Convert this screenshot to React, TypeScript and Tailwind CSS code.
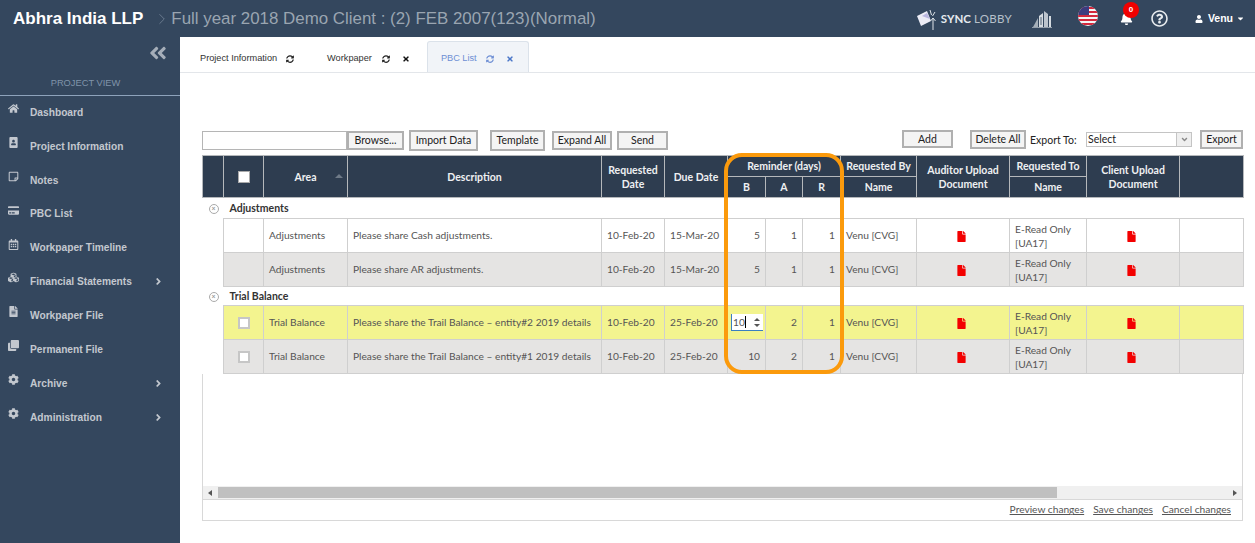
import {
  FaAngleDoubleLeft,
  FaAngleRight,
  FaBell,
  FaCaretDown,
  FaClone,
  FaCog,
  FaCreditCard,
  FaCubes,
  FaFile,
  FaFileAlt,
  FaHome,
  FaPortrait,
  FaRegCalendarAlt,
  FaRegQuestionCircle,
  FaRegStickyNote,
  FaSyncAlt,
  FaTimes,
  FaUser,
} from 'react-icons/fa';
import { ChevronRight } from 'lucide-react';

const NAV = [
  { label: 'Dashboard', icon: FaHome },
  { label: 'Project Information', icon: FaPortrait },
  { label: 'Notes', icon: FaRegStickyNote },
  { label: 'PBC List', icon: FaCreditCard },
  { label: 'Workpaper Timeline', icon: FaRegCalendarAlt },
  { label: 'Financial Statements', icon: FaCubes, arrow: true },
  { label: 'Workpaper File', icon: FaFileAlt },
  { label: 'Permanent File', icon: FaClone },
  { label: 'Archive', icon: FaCog, arrow: true },
  { label: 'Administration', icon: FaCog, arrow: true },
];

const COLS = [21, 40, 84, 254, 63, 63, 38, 37, 38, 76, 93, 77, 93, 64];

const ROWS = [
  { group: 'Adjustments' },
  { area: 'Adjustments', desc: 'Please share Cash adjustments.', due: '15-Mar-20', b: '5', a: '1', r: '1', bg: 'bg-white' },
  { area: 'Adjustments', desc: 'Please share AR adjustments.', due: '15-Mar-20', b: '5', a: '1', r: '1', bg: 'bg-[#e5e4e3]' },
  { group: 'Trial Balance' },
  { area: 'Trial Balance', desc: 'Please share the Trail Balance – entity#2 2019 details', due: '25-Feb-20', b: 'edit', a: '2', r: '1', bg: 'bg-[#f3f48f]', check: true },
  { area: 'Trial Balance', desc: 'Please share the Trail Balance – entity#1 2019 details', due: '25-Feb-20', b: '10', a: '2', r: '1', bg: 'bg-[#e5e4e3]', check: true },
];

const th = 'border border-[#b5b8bb] text-center align-middle font-bold leading-[14px] p-0';
const td = 'border border-[#cfcfcf] px-[5px] py-0 align-middle whitespace-nowrap';

const Btn = ({ children, className }: { children: React.ReactNode; className: string }) => (
  <button className={`border-2 border-[#b0b0b0] bg-[#f4f4f4] text-[10.5px] text-[#222] shrink-0 leading-none ${className}`}>
    {children}
  </button>
);

const RedFile = () => <FaFile className="mr-[3px] inline text-[#f30000] text-[11px]" />;

const Flag = () => (
  <svg width="20" height="20" viewBox="0 0 20 20">
    <clipPath id="flagclip">
      <circle cx="10" cy="10" r="10" />
    </clipPath>
    <g clipPath="url(#flagclip)">
      <rect width="20" height="20" fill="#f5f5f5" />
      <rect y="1" width="20" height="2" fill="#d3283c" />
      <rect y="5" width="20" height="2" fill="#d3283c" />
      <rect y="9" width="20" height="2" fill="#d3283c" />
      <rect y="13" width="20" height="2" fill="#d3283c" />
      <rect y="17" width="20" height="2" fill="#d3283c" />
      <rect width="11" height="9" fill="#3c3b7e" />
    </g>
  </svg>
);

const Building = () => (
  <svg width="20" height="18" viewBox="0 0 20 18" fill="#d5dbe0">
    <path d="M1 17 L6 8 L6 17 Z" opacity="0.7" />
    <path d="M7 6 L11 3 L11 17 L7 17 Z" />
    <path d="M12 1 L16 4 L16 17 L12 17 Z" opacity="0.85" />
    <rect x="17" y="6" width="2" height="11" />
    <rect x="0" y="17" width="20" height="1" opacity="0.6" />
    <path d="M8 8h2M8 10h2M8 12h2M8 14h2" stroke="#34475e" strokeWidth="0.8" />
  </svg>
);

const SyncLogo = () => (
  <svg width="24" height="24" viewBox="0 0 24 24">
    <path d="M1 9 L11 4 L15 14 L5 19 Z" fill="#ececf6" />
    <path d="M6 9 L11 6 L14 12 Z" fill="#b9b6e0" />
    <path d="M17 23 V11 M14.5 14 L17 11 L19.5 14" stroke="#dfe4e8" strokeWidth="1" fill="none" />
    <path d="M14 3 L15.5 8 M19 5 L16.5 9" stroke="#dfe4e8" strokeWidth="1" />
  </svg>
);

const App = () => {
  return (
    <div className="flex h-[543px] w-[1255px] flex-col overflow-hidden bg-white font-['Liberation_Sans',sans-serif]">
      <header className="flex h-[37px] shrink-0 items-center bg-[#34475e] pl-[13px] pr-[10px]">
        <span className="text-[17px] font-bold text-white">Abhra India LLP</span>
        <ChevronRight size={18} strokeWidth={1} className="ml-[10px] text-[#7a8a9c]" />
        <span className="text-[16.9px] text-[#9aa5b1]">Full year 2018 Demo Client : (2) FEB 2007(123)(Normal)</span>
        <div className="ml-auto flex items-center">
          <SyncLogo />
          <span className="ml-[1px] text-[11.5px] font-bold text-[#e6eaee] font-['Lato',sans-serif]">SYNC</span>
          <span className="ml-[3px] text-[11.5px] text-[#b6c0ca] font-['Lato',sans-serif] tracking-[0.3px]">LOBBY</span>
          <div className="ml-[20px]"><Building /></div>
          <div className="mb-[5px] ml-[26px]"><Flag /></div>
          <div className="relative ml-[22px]">
            <FaBell className="text-[13px] text-white" />
            <span className="absolute -top-[10px] -right-[6px] flex h-[16px] w-[16px] items-center justify-center rounded-full bg-[#f00000] text-[8px] font-bold text-white">0</span>
          </div>
          <FaRegQuestionCircle className="ml-[18px] text-[17px] text-[#e8ecef]" />
          <FaUser className="ml-[27px] text-[8px] text-white" />
          <span className="ml-[5px] text-[10.5px] font-bold text-white">Venu</span>
          <FaCaretDown className="ml-[3px] text-[9px] text-white" />
        </div>
      </header>

      <div className="flex min-h-0 flex-1">
        <aside className="flex w-[180px] shrink-0 flex-col bg-[#34475e]">
          <div className="flex h-[33px] justify-end pr-[12px] pt-[6px]">
            <FaAngleDoubleLeft className="text-[20px] text-[#a5aeb9]" />
          </div>
          <div className="h-[26px] border-b border-[#8ea3bb] pr-[9px] pt-[7px] text-center text-[9.3px] text-[#8094aa]">PROJECT VIEW</div>
          <nav className="-mt-[0.5px]">
            {NAV.map((item) => (
              <div key={item.label} className="flex h-[33.9px] items-center pl-[8px] pr-[16px] text-[#c3c8cf]">
                <div className="flex w-[22px] -translate-y-[4px] justify-start">
                  <item.icon className="text-[11px]" />
                </div>
                <span className="text-[10.2px] font-bold">{item.label}</span>
                {item.arrow && <FaAngleRight className="ml-auto text-[11px]" />}
              </div>
            ))}
          </nav>
        </aside>

        <main className="flex min-w-0 flex-1 flex-col">
          <div className="flex h-[36px] shrink-0 items-end border-b border-[#e3e6ea] pl-[20px]">
            <div className="flex h-[29px] items-center pt-[3px] text-[9.2px] text-[#333]">
              <span>Project Information</span>
              <FaSyncAlt className="ml-[9px] text-[8px] text-[#222]" />
            </div>
            <div className="ml-[33px] flex h-[29px] items-center pt-[3px] text-[9.2px] text-[#333]">
              <span>Workpaper</span>
              <FaSyncAlt className="ml-[10px] text-[8px] text-[#222]" />
              <FaTimes className="ml-[12px] text-[8px] text-[#111]" />
            </div>
            <div className="ml-[17px] flex h-[31px] w-[102px] items-center rounded-t-[3px] border border-b-0 border-[#dbe2ea] bg-[#f1f4f8] pl-[13px] pt-[4px] text-[9.2px] text-[#6e8fd4]">
              <span>PBC List</span>
              <FaSyncAlt className="ml-[9px] text-[8px]" />
              <FaTimes className="ml-[12px] text-[8px] text-[#4a76c8]" />
            </div>
          </div>

          <div className="relative ml-[22px] mr-[12px] flex min-h-0 flex-1 flex-col">
            <div className="mt-[57px] flex h-[22px] items-start font-['Lato',sans-serif]">
              <div className="mt-[1px] h-[19px] w-[145px] shrink-0 border border-[#b5b5b5] bg-white" />
              <Btn className="mt-[1px] h-[19px] w-[57px] border-1">Browse...</Btn>
              <Btn className="ml-[5px] h-[21px] w-[69px]">Import Data</Btn>
              <Btn className="ml-[12px] h-[21px] w-[55px]">Template</Btn>
              <Btn className="ml-[7px] h-[19px] w-[60px] mt-[1px]">Expand All</Btn>
              <Btn className="ml-[5px] h-[19px] w-[51px] mt-[1px]">Send</Btn>
              <Btn className="ml-[234px] h-[18px] w-[51px]">Add</Btn>
              <Btn className="ml-[17px] h-[19px] w-[56px]">Delete All</Btn>
              <span className="ml-[4px] mt-[3px] w-[47px] shrink-0 text-[10.5px] leading-[14px] text-[#222]">Export To:</span>
              <div className="ml-[9px] mt-[2px] flex h-[15px] w-[106px] shrink-0 items-center border border-[#c4c4c4] pl-[1px] text-[10.5px] text-[#222]">
                Select
                <span className="ml-auto flex h-[13px] w-[15px] items-center justify-center border-l border-[#c4c4c4] bg-[#efefef]">
                  <FaAngleRight className="rotate-90 text-[9px] text-[#888]" />
                </span>
              </div>
              <Btn className="ml-[8px] h-[19px] w-[43px]">Export</Btn>
            </div>

            <table className="mt-[3px] w-[1041px] table-fixed border-collapse font-['Lato',sans-serif] text-[10.2px]">
              <colgroup>
                {COLS.map((w, i) => (
                  <col key={i} style={{ width: w }} />
                ))}
              </colgroup>
              <thead className="bg-[#2e3d50] text-[10.5px] text-[#eef0f2]">
                <tr className="h-[21px]">
                  <th rowSpan={2} className={th} />
                  <th rowSpan={2} className={th}>
                    <span className="mx-auto block h-[12px] w-[12px] border border-[#aaa] bg-white" />
                  </th>
                  <th rowSpan={2} className={th}>
                    <div className="relative">
                      Area
                      <span className="absolute right-[4px] top-[4px] h-0 w-0 border-x-[4px] border-b-[4px] border-x-transparent border-b-[#6f7b88]" />
                    </div>
                  </th>
                  <th rowSpan={2} className={th}>Description</th>
                  <th rowSpan={2} className={th}>Requested<br />Date</th>
                  <th rowSpan={2} className={th}>Due Date</th>
                  <th colSpan={3} className={th}>Reminder (days)</th>
                  <th className={th}>Requested By</th>
                  <th rowSpan={2} className={th}>Auditor Upload<br />Document</th>
                  <th className={th}>Requested To</th>
                  <th rowSpan={2} className={th}>Client Upload<br />Document</th>
                  <th rowSpan={2} className={th} />
                </tr>
                <tr className="h-[21px]">
                  <th className={th}>B</th>
                  <th className={th}>A</th>
                  <th className={th}>R</th>
                  <th className={th}>Name</th>
                  <th className={th}>Name</th>
                </tr>
              </thead>
              <tbody className="text-[#555]">
                {ROWS.map((row, i) =>
                  row.group ? (
                    <tr key={i} className={row.group === 'Adjustments' ? 'h-[21px]' : 'h-[19px]'}>
                      <td colSpan={14} className="p-0 align-middle">
                        <div className="flex items-center pt-[1px] font-bold text-[10.5px] text-[#333]">
                          <span className="ml-[6px] flex h-[10px] w-[10px] items-center justify-center rounded-full border border-[#aaa] text-[7px] leading-none text-[#999]">×</span>
                          <span className="ml-[11px]">{row.group}</span>
                        </div>
                      </td>
                    </tr>
                  ) : (
                    <tr key={i} className="h-[34px]">
                      <td className="p-0" />
                      <td className={`${td} ${row.bg} text-center`}>
                        {row.check && <span className="mx-auto block h-[12px] w-[12px] border-2 border-[#c6c6c6] bg-white" />}
                      </td>
                      <td className={`${td} ${row.bg}`}>{row.area}</td>
                      <td className={`${td} ${row.bg}`}>{row.desc}</td>
                      <td className={`${td} ${row.bg}`}>10-Feb-20</td>
                      <td className={`${td} ${row.bg}`}>{row.due}</td>
                      <td className={`${td} ${row.bg} text-right`}>
                        {row.b === 'edit' ? (
                          <div className="-mx-[2px] flex h-[17px] w-[32px] items-center border-b border-l border-[#3a7fc1] bg-white pl-[1px] text-left leading-none">
                            <span>10</span>
                            <span className="h-[12px] w-px bg-black" />
                            <span className="ml-auto flex flex-col pr-[3px] text-[#555]">
                              <span className="h-0 w-0 border-x-[3px] border-b-[3px] border-x-transparent border-b-[#555]" />
                              <span className="mt-[3px] h-0 w-0 border-x-[3px] border-t-[3px] border-x-transparent border-t-[#555]" />
                            </span>
                          </div>
                        ) : (
                          row.b
                        )}
                      </td>
                      <td className={`${td} ${row.bg} text-right`}>{row.a}</td>
                      <td className={`${td} ${row.bg} text-right`}>{row.r}</td>
                      <td className={`${td} ${row.bg}`}>Venu [CVG]</td>
                      <td className={`${td} ${row.bg} text-center`}><RedFile /></td>
                      <td className={`${td} ${row.bg} leading-[14px]`}>E-Read Only<br />[UA17]</td>
                      <td className={`${td} ${row.bg} text-center`}><RedFile /></td>
                      <td className={`${td} ${row.bg}`} />
                    </tr>
                  ),
                )}
              </tbody>
            </table>

            <div className="flex h-[147px] w-[1041px] flex-col border border-t-0 border-[#d8d8d8] font-['Lato',sans-serif]">
              <div className="flex-1" />
              <div className="flex h-[13px] items-center bg-[#f0f0f0]">
                <span className="ml-[5px] h-0 w-0 border-y-[3px] border-r-[4px] border-y-transparent border-r-[#555]" />
                <div className="ml-[6px] h-[11px] w-[839px] bg-[#c0c0c0]" />
                <span className="ml-auto mr-[5px] h-0 w-0 border-y-[3px] border-l-[4px] border-y-transparent border-l-[#555]" />
              </div>
              <div className="flex h-[21px] items-center justify-end gap-[9px] border-t border-[#d8d8d8] pr-[11px] text-[10.2px] text-[#555] underline">
                <span>Preview changes</span>
                <span>Save changes</span>
                <span>Cancel changes</span>
              </div>
            </div>

            <div className="pointer-events-none absolute left-[522px] top-[80px] h-[221px] w-[120px] rounded-[18px] border-[4px] border-[#fb9a0c]" />
          </div>
        </main>
      </div>
    </div>
  );
};

export default App;
